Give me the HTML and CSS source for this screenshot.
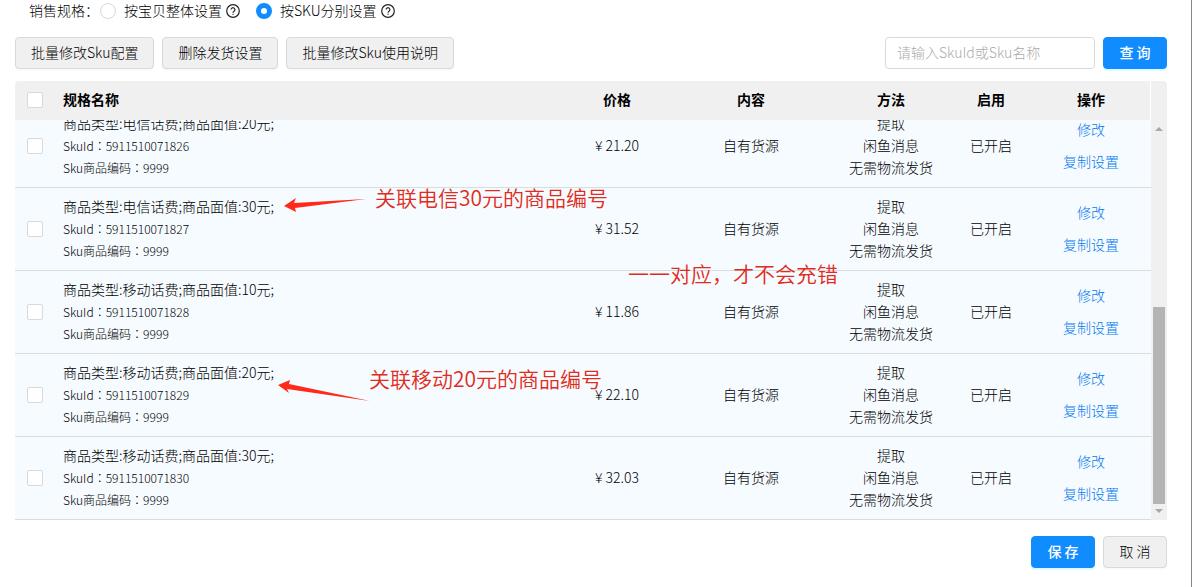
FILE: index.html
```
<!DOCTYPE html>
<html lang="zh">
<head>
    <meta charset="UTF-8">
    <meta name="viewport" content="width=device-width, initial-scale=1.0">
    <title>Sku设置</title>
    <link rel="stylesheet" href="styles.css">
</head>
<body>
<div class="page">
    <div class="spec-type">
        <span class="spec-label">销售规格：</span>
        <label class="radio-item"><input type="radio" name="specType" value="item">按宝贝整体设置</label>
        <svg class="help-icon" viewBox="0 0 14 14"><circle cx="7" cy="7" r="6.3"/><path d="M5.1 5.6a1.9 1.9 0 1 1 2.9 1.6c-.7.4-1 .8-1 1.5M7 9.7v1.1"/></svg>
        <label class="radio-item radio-second"><input type="radio" name="specType" value="sku" checked>按SKU分别设置</label>
        <svg class="help-icon" viewBox="0 0 14 14"><circle cx="7" cy="7" r="6.3"/><path d="M5.1 5.6a1.9 1.9 0 1 1 2.9 1.6c-.7.4-1 .8-1 1.5M7 9.7v1.1"/></svg>
    </div>

    <div class="toolbar">
        <button type="button" class="btn">批量修改Sku配置</button>
        <button type="button" class="btn">删除发货设置</button>
        <button type="button" class="btn">批量修改Sku使用说明</button>
        <form class="search">
            <input type="text" class="search-input" aria-label="SkuId或Sku名称" placeholder="请输入SkuId或Sku名称">
            <button type="submit" class="btn btn-primary">查 询</button>
        </form>
    </div>

    <div class="table-wrapper">
        <table class="sku-table">
            <thead>
                <tr>
                    <th class="check"><input type="checkbox" aria-label="全选"></th>
                    <th class="name">规格名称</th>
                    <th>价格</th>
                    <th>内容</th>
                    <th>方法</th>
                    <th>启用</th>
                    <th>操作</th>
                </tr>
            </thead>
            <tbody>
                <tr>
                    <td class="check"><input type="checkbox" aria-label="选择 5911510071826"></td>
                    <td class="name">
                        <p class="title">商品类型:电信话费;商品面值:20元;</p>
                        <p class="code" lang="zh-TW">SkuId：5911510071826</p>
                        <p class="code" lang="zh-TW">Sku商品编码：9999</p>
                    </td>
                    <td>¥ 21.20</td>
                    <td>自有货源</td>
                    <td>提取<br>闲鱼消息<br>无需物流发货</td>
                    <td>已开启</td>
                    <td class="actions"><a href="#">修改</a><a href="#">复制设置</a></td>
                </tr>
                <tr>
                    <td class="check"><input type="checkbox" aria-label="选择 5911510071827"></td>
                    <td class="name">
                        <p class="title">商品类型:电信话费;商品面值:30元;</p>
                        <p class="code" lang="zh-TW">SkuId：5911510071827</p>
                        <p class="code" lang="zh-TW">Sku商品编码：9999</p>
                    </td>
                    <td>¥ 31.52</td>
                    <td>自有货源</td>
                    <td>提取<br>闲鱼消息<br>无需物流发货</td>
                    <td>已开启</td>
                    <td class="actions"><a href="#">修改</a><a href="#">复制设置</a></td>
                </tr>
                <tr>
                    <td class="check"><input type="checkbox" aria-label="选择 5911510071828"></td>
                    <td class="name">
                        <p class="title">商品类型:移动话费;商品面值:10元;</p>
                        <p class="code" lang="zh-TW">SkuId：5911510071828</p>
                        <p class="code" lang="zh-TW">Sku商品编码：9999</p>
                    </td>
                    <td>¥ 11.86</td>
                    <td>自有货源</td>
                    <td>提取<br>闲鱼消息<br>无需物流发货</td>
                    <td>已开启</td>
                    <td class="actions"><a href="#">修改</a><a href="#">复制设置</a></td>
                </tr>
                <tr>
                    <td class="check"><input type="checkbox" aria-label="选择 5911510071829"></td>
                    <td class="name">
                        <p class="title">商品类型:移动话费;商品面值:20元;</p>
                        <p class="code" lang="zh-TW">SkuId：5911510071829</p>
                        <p class="code" lang="zh-TW">Sku商品编码：9999</p>
                    </td>
                    <td>¥ 22.10</td>
                    <td>自有货源</td>
                    <td>提取<br>闲鱼消息<br>无需物流发货</td>
                    <td>已开启</td>
                    <td class="actions"><a href="#">修改</a><a href="#">复制设置</a></td>
                </tr>
                <tr>
                    <td class="check"><input type="checkbox" aria-label="选择 5911510071830"></td>
                    <td class="name">
                        <p class="title">商品类型:移动话费;商品面值:30元;</p>
                        <p class="code" lang="zh-TW">SkuId：5911510071830</p>
                        <p class="code" lang="zh-TW">Sku商品编码：9999</p>
                    </td>
                    <td>¥ 32.03</td>
                    <td>自有货源</td>
                    <td>提取<br>闲鱼消息<br>无需物流发货</td>
                    <td>已开启</td>
                    <td class="actions"><a href="#">修改</a><a href="#">复制设置</a></td>
                </tr>
            </tbody>
        </table>

        <div class="scrollbar">
            <svg class="arrow" viewBox="0 0 8 4"><path d="M0 4L4 0L8 4z"/></svg>
            <div class="thumb"></div>
            <svg class="arrow" viewBox="0 0 8 4"><path d="M0 0L4 4L8 0z"/></svg>
        </div>

        <!-- Notes drawn over the table -->
        <svg class="pointer pointer-telecom" viewBox="0 0 82 14"><path d="M0 8L12 0L10 5L82 1L11 10L12 14z"/></svg>
        <span class="note note-telecom">关联电信30元的商品编号</span>
        <span class="note note-match">一一对应，才不会充错</span>
        <svg class="pointer pointer-mobile" viewBox="0 0 92 21"><path d="M0 5L12 0L11 4L92 21L9 9L11 13z"/></svg>
        <span class="note note-mobile">关联移动20元的商品编号</span>
    </div>

    <div class="footer">
        <button type="button" class="btn btn-primary">保 存</button>
        <button type="button" class="btn">取 消</button>
    </div>
</div>
</body>
</html>
```

FILE: styles.css
```
* {
    box-sizing: border-box;
}

body {
    margin: 0;
    font-family: "Noto Sans CJK SC", sans-serif;
    font-size: 14px;
    font-weight: 300;
    line-height: 22px;
    color: #000;
    background-color: #fff;
}

.page {
    min-height: 100vh;
    padding: 0 24px 16px 15px;
    border-right: 1px solid #888;
}

p {
    margin: 0;
}

a {
    color: #0078f0;
    text-decoration: none;
}

a:hover {
    text-decoration: underline;
}

/* Radio row */
.spec-type {
    display: flex;
    align-items: center;
    padding: 0 0 2px 14px;
    line-height: 20px;
}

.spec-label {
    width: 71px;
    white-space: nowrap;
}

.radio-item {
    display: flex;
    align-items: center;
    gap: 8px;
}

.radio-second {
    margin-left: 16px;
}

input[type="radio"],
input[type="checkbox"] {
    appearance: none;
    width: 16px;
    height: 16px;
    margin: 0;
    border: 1px solid #d9d9d9;
    background-color: #fff;
}

input[type="radio"] {
    margin-top: 2px;
    border-radius: 50%;
}

input[type="radio"]:checked {
    border: 5px solid #108cff;
}

input[type="checkbox"] {
    display: block;
    border-radius: 2px;
}

.help-icon {
    width: 14px;
    height: 14px;
    margin: 2px 0 0 4px;
    fill: none;
    stroke: #222;
    stroke-width: 1.2;
}

/* Buttons and search */
.toolbar {
    display: flex;
    gap: 8px;
    margin: 15px 0 12px;
}

.btn {
    height: 32px;
    min-width: 64px;
    padding: 0 15px 2px;
    border: 1px solid #d9d9d9;
    border-radius: 4px;
    background-color: #f0f0f0;
    box-shadow: 0 2px 0 rgba(0, 0, 0, 0.02);
    color: #000;
    font: inherit;
    white-space: nowrap;
    cursor: pointer;
}

.btn-primary {
    border-color: #108cff;
    background-color: #108cff;
    box-shadow: 0 2px 0 #e0f8ff;
    color: #fff;
    font-weight: 500;
}

.search {
    display: flex;
    gap: 8px;
    margin-left: auto;
}

.search-input {
    width: 210px;
    height: 32px;
    padding: 0 11px 2px;
    border: 1px solid #d9d9d9;
    border-radius: 4px;
    font: inherit;
}

.search-input::placeholder {
    color: #aaa;
}

/* Table */
.table-wrapper {
    position: relative;
    display: flex;
}

.sku-table {
    display: block;
    flex: 1;
}

.sku-table thead {
    display: block;
    border-right: 1px solid #fff;
    border-radius: 4px 0 0 0;
    background-color: #f0f0f0;
}

.sku-table tbody {
    display: flex;
    flex-direction: column;
    justify-content: flex-end;
    height: 400px;
    overflow: hidden;
}

.sku-table tr {
    display: grid;
    grid-template-columns: 40px 1fr 108px 160px 120px 80px 120px;
    align-items: center;
    flex-shrink: 0;
}

.sku-table thead tr {
    height: 39px;
    margin-right: -1px;
}

.sku-table tbody tr {
    height: 83px;
    border-bottom: 1px solid #d9dde0;
    background-color: #f6fbff;
}

.sku-table th,
.sku-table td {
    padding: 0 8px 2px;
    text-align: center;
}

.sku-table th {
    padding-bottom: 3px;
    font-weight: 700;
}

.sku-table td.name {
    padding-bottom: 0;
    text-align: left;
}

.sku-table th.name {
    text-align: left;
}

.sku-table td.check {
    padding: 0 12px;
}

.sku-table th.check {
    padding: 0 12px 2px;
}

.title {
    margin-bottom: 2px;
    line-height: 20px;
}

.code {
    font-family: "Noto Sans CJK TC", sans-serif;
    font-size: 12px;
}

.actions {
    display: flex;
    flex-direction: column;
    align-items: center;
    gap: 10px;
}

.scrollbar {
    display: flex;
    flex-direction: column;
    align-items: center;
    gap: 5px;
    width: 16px;
    padding: 46px 0 7px;
    border-radius: 0 4px 0 0;
    background-color: #f0f0f0;
}

.arrow {
    width: 8px;
    height: 4px;
    fill: #a8a8a8;
}

.thumb {
    width: 12px;
    height: 197px;
    margin-top: auto;
    background-color: #b4b4b4;
}

/* Notes */
.note {
    position: absolute;
    font-size: 21px;
    font-weight: 350;
    line-height: 28px;
    color: #e02b20;
    white-space: nowrap;
}

.pointer {
    position: absolute;
    fill: #ff2a1a;
}

.note-telecom {
    top: 102px;
    left: 360px;
}

.note-match {
    top: 178px;
    left: 613px;
}

.note-mobile {
    top: 283px;
    left: 354px;
}

.pointer-telecom {
    top: 117px;
    left: 269px;
    width: 82px;
    height: 14px;
}

.pointer-mobile {
    top: 299px;
    left: 263px;
    width: 92px;
    height: 21px;
}

.footer {
    display: flex;
    justify-content: flex-end;
    gap: 8px;
    margin-top: 16px;
}
```
